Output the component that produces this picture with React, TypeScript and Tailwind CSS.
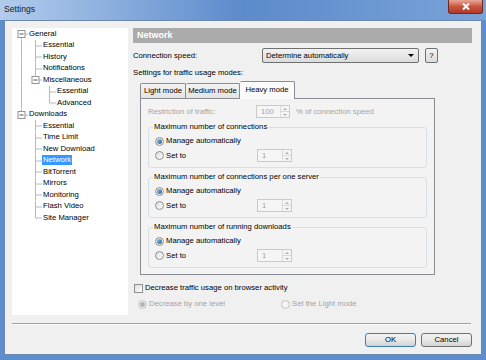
type Cell = "pipe" | "tee" | "end" | "blank" | "openTop" | "openEnd";

const tree: { label: string; cells: Cell[]; selected?: boolean }[] = [
  { label: "General", cells: ["openTop"] },
  { label: "Essential", cells: ["pipe", "tee"] },
  { label: "History", cells: ["pipe", "tee"] },
  { label: "Notifications", cells: ["pipe", "tee"] },
  { label: "Miscellaneous", cells: ["pipe", "openEnd"] },
  { label: "Essential", cells: ["pipe", "blank", "tee"] },
  { label: "Advanced", cells: ["pipe", "blank", "end"] },
  { label: "Downloads", cells: ["openEnd"] },
  { label: "Essential", cells: ["blank", "tee"] },
  { label: "Time Limit", cells: ["blank", "tee"] },
  { label: "New Download", cells: ["blank", "tee"] },
  { label: "Network", cells: ["blank", "tee"], selected: true },
  { label: "BitTorrent", cells: ["blank", "tee"] },
  { label: "Mirrors", cells: ["blank", "tee"] },
  { label: "Monitoring", cells: ["blank", "tee"] },
  { label: "Flash Video", cells: ["blank", "tee"] },
  { label: "Site Manager", cells: ["blank", "end"] },
];

function TreeCell({ kind }: { kind: Cell }) {
  const c = "#b8b8b8";
  return (
    <svg width="14" height="11.5" viewBox="0 0 14 11.5" className="shrink-0">
      {(kind === "pipe" || kind === "tee") && <line x1="7.5" y1="0" x2="7.5" y2="11.5" stroke={c} />}
      {(kind === "end" || kind === "openEnd") && <line x1="7.5" y1="0" x2="7.5" y2="6" stroke={c} />}
      {kind === "openTop" && <line x1="7.5" y1="6" x2="7.5" y2="11.5" stroke={c} />}
      {kind !== "pipe" && kind !== "blank" && <line x1="7.5" y1="6" x2="14" y2="6" stroke={c} />}
      {(kind === "openTop" || kind === "openEnd") && (
        <g>
          <rect x="4" y="2.5" width="7" height="7" fill="#fff" stroke="#929292" />
          <line x1="5.5" y1="6" x2="9.5" y2="6" stroke="#505050" />
        </g>
      )}
    </svg>
  );
}

function Radio({ checked, disabled }: { checked?: boolean; disabled?: boolean }) {
  return (
    <span
      className={`flex h-[9px] w-[9px] shrink-0 items-center justify-center rounded-full border ${
        disabled ? "border-[#c2c2c2] bg-[#f4f4f4]" : "border-[#8e8f8f] bg-linear-to-br from-[#dcdcdc] to-[#ffffff]"
      }`}
    >
      {checked && (
        <span
          className={`h-[5px] w-[5px] rounded-full ${
            disabled ? "bg-[#b4b4b4]" : "bg-linear-to-br from-[#8ccaf2] to-[#1c5a98]"
          }`}
        />
      )}
    </span>
  );
}

function Spin({ value, w }: { value: string; w: string }) {
  return (
    <div className={`flex h-[13px] ${w} border border-[#cacaca] bg-[#f5f5f5]`}>
      <span className="flex flex-1 items-center pl-[4px] text-[#a3a3a3]">{value}</span>
      <div className="flex w-[9px] flex-col border-l border-[#dadada]">
        <span className="flex flex-1 items-center justify-center border-b border-[#dadada]">
          <svg width="4" height="2" viewBox="0 0 4 2">
            <path d="M0 2h4L2 0z" fill="#b0b0b0" />
          </svg>
        </span>
        <span className="flex flex-1 items-center justify-center">
          <svg width="4" height="2" viewBox="0 0 4 2">
            <path d="M0 0h4L2 2z" fill="#b0b0b0" />
          </svg>
        </span>
      </div>
    </div>
  );
}

function Group({ title }: { title: string }) {
  return (
    <fieldset className="rounded-[3px] border border-[#d5dfe5] pb-[5px]">
      <legend className="ml-[4px] px-[1px] leading-[10px]">{title}</legend>
      <div className="mt-[3px] flex h-[12px] items-center gap-[2px] pl-[6px]">
        <Radio checked />
        <span>Manage automatically</span>
      </div>
      <div className="mt-[2px] flex h-[13px] items-center pl-[6px]">
        <div className="flex w-[102px] items-center gap-[2px]">
          <Radio />
          <span>Set to</span>
        </div>
        <Spin value="1" w="w-[35px]" />
      </div>
    </fieldset>
  );
}

const btn =
  "flex h-[14px] w-[51px] items-center justify-center rounded-[3px] border bg-linear-to-b from-[#f3f3f3] via-[#e8e8e8] to-[#d2d2d2]";

export default function App() {
  return (
    <div className="flex h-[360px] w-[486px] flex-col overflow-hidden bg-[#5b8dcf] font-['Liberation_Sans',Arial,sans-serif] text-[7.7px] leading-none text-black">
      <div className="flex h-[20px] shrink-0 items-start bg-linear-to-r from-[#b3cced] via-[#5c8bcb] to-[#79a2d8]">
        <span className="ml-[4px] mt-[5px] text-[8.6px] text-[#1a1a1a]">Settings</span>
        <div className="ml-auto mr-[3px] flex h-[14px] w-[35px] items-center justify-center rounded-b-[3px] border border-t-0 border-[#6b2a22] bg-linear-to-b from-[#e9a797] via-[#c9553f] to-[#b23a26]">
          <svg width="8" height="7" viewBox="0 0 8 7">
            <path d="M1 0.5L7 6.5M7 0.5L1 6.5" stroke="#fff" strokeWidth="2" />
          </svg>
        </div>
      </div>

      <div className="mx-[4px] flex h-[335px] flex-col border border-[#6f89ae] bg-[#f0f0f0]">
        <div className="flex gap-[5px] pl-[7px] pt-[7px]">
          <div className="flex h-[287px] w-[116px] flex-col bg-white pl-[2px]">
            {tree.map((row, i) => (
              <div key={i} className="flex h-[11.5px] items-center">
                {row.cells.map((c, j) => (
                  <TreeCell key={j} kind={c} />
                ))}
                <span
                  className={`flex h-[10px] items-center px-[1px] ${
                    row.selected ? "bg-[#3399ff] text-white" : ""
                  }`}
                >
                  {row.label}
                </span>
              </div>
            ))}
          </div>

          <div className="flex w-[339px] flex-col">
            <div className="flex h-[15px] items-center bg-[#ababab] pl-[4px] text-[9px] font-bold text-white">
              Network
            </div>
            <div className="mt-[5px] flex h-[15px] items-center">
              <span className="w-[129px]">Connection speed:</span>
              <div className="flex h-[15px] w-[157px] items-center rounded-[2px] border border-[#707070] bg-linear-to-b from-[#f3f3f3] to-[#dcdcdc] pl-[3px] pr-[4px]">
                <span className="flex-1">Determine automatically</span>
                <svg width="6" height="3" viewBox="0 0 6 3">
                  <path d="M0 0h6L3 3z" fill="#000" />
                </svg>
              </div>
              <div className="ml-[6px] flex h-[15px] w-[13px] items-center justify-center rounded-[2px] border border-[#707070] bg-linear-to-b from-[#f3f3f3] to-[#dcdcdc]">
                ?
              </div>
            </div>
            <div className="mt-[4px] flex h-[12px] items-center">Settings for traffic usage modes:</div>

            <div className="ml-[7px] mt-[2px] flex flex-col">
              <div className="flex h-[17px] items-end">
                <div className="flex h-[15px] w-[46px] items-center justify-center rounded-t-[2px] border border-b-0 border-[#898c95] bg-linear-to-b from-[#f3f3f3] to-[#e3e3e3]">
                  Light mode
                </div>
                <div className="flex h-[15px] w-[54px] items-center justify-center rounded-t-[2px] border border-b-0 border-l-0 border-[#898c95] bg-linear-to-b from-[#f3f3f3] to-[#e3e3e3]">
                  Medium mode
                </div>
                <div className="relative z-10 -mb-px flex h-[18px] w-[55px] items-center justify-center rounded-t-[2px] border border-b-0 border-l-0 border-[#898c95] bg-[#fbfbfb] pb-[1px]">
                  Heavy mode
                </div>
              </div>
              <div className="flex h-[177px] w-[295px] flex-col border border-[#898c95] bg-[#f3f3f3] px-[7px]">
                <div className="mt-[6px] flex h-[13px] items-center text-[#a3a3a3]">
                  <span className="w-[108px]">Restriction of traffic:</span>
                  <Spin value="100" w="w-[34px]" />
                  <span className="ml-[6px]">% of connection speed</span>
                </div>
                <div className="mt-[4px] flex flex-col gap-[4px]">
                  <Group title="Maximum number of connections" />
                  <Group title="Maximum number of connections per one server" />
                  <Group title="Maximum number of running downloads" />
                </div>
              </div>
            </div>

            <div className="mt-[7px] flex h-[12px] items-center gap-[2px] pl-[1px]">
              <span className="h-[9px] w-[9px] border border-[#8e8f8f] bg-linear-to-br from-[#dcdcdc] to-[#ffffff]" />
              <span>Decrease traffic usage on browser activity</span>
            </div>
            <div className="mt-[4px] flex h-[12px] items-center pl-[5px] text-[#a3a3a3]">
              <div className="flex w-[143px] items-center gap-[2px]">
                <Radio checked disabled />
                <span>Decrease by one level</span>
              </div>
              <div className="flex items-center gap-[2px]">
                <Radio disabled />
                <span>Set the Light mode</span>
              </div>
            </div>
          </div>
        </div>

        <div className="ml-[7px] mr-[10px] mt-[8px] h-[2px] border-t border-b border-t-[#a0a0a0] border-b-white" />

        <div className="mt-[8px] flex justify-end gap-[5px] pr-[9px]">
          <div className={`${btn} border-[#3c7fb1]`}>OK</div>
          <div className={`${btn} border-[#707070]`}>Cancel</div>
        </div>
      </div>
    </div>
  );
}
